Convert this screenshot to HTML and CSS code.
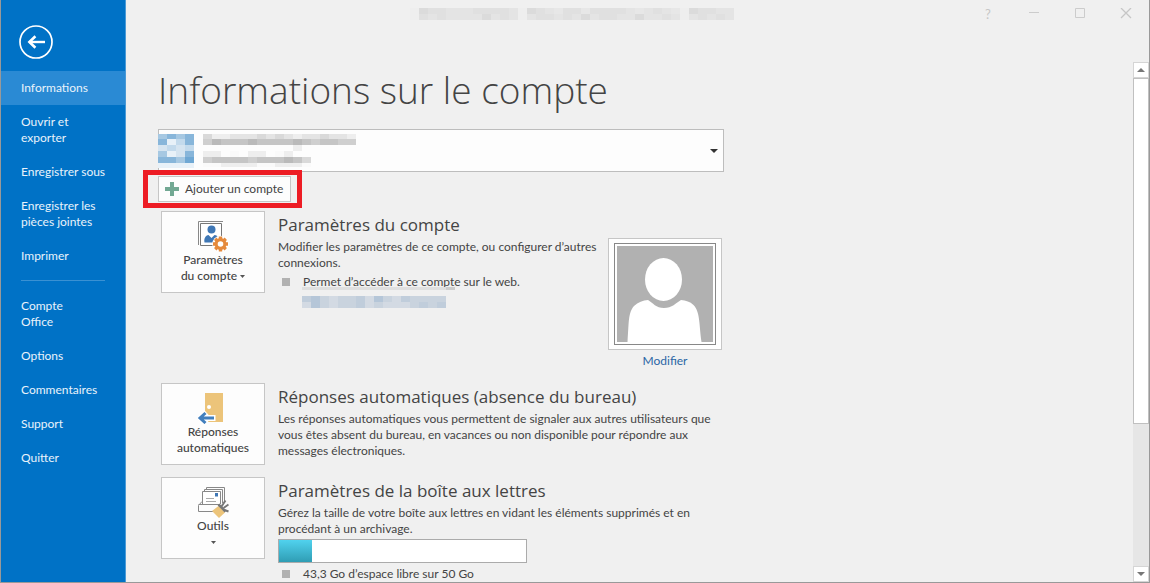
FILE: index.html
```html
<!DOCTYPE html>
<html lang="fr">
<head>
<meta charset="utf-8">
<title>Informations sur le compte</title>
<link rel="stylesheet" href="styles.css">
</head>
<body>
<div class="window">
  <nav class="sidebar" aria-label="Fichier">
    <button class="back" type="button" aria-label="Retour">
      <svg viewBox="0 0 34 34" width="34" height="34" fill="none" stroke="#fff"><circle cx="17" cy="17" r="16" stroke-width="1.7"/><path d="M10.5 17H26" stroke-width="2.4"/><path d="M16.4 11.2 10.4 17l6 5.8" stroke-width="2.6"/></svg>
    </button>
    <ul class="menu">
      <li><a class="menu-item current" href="#info" aria-current="page">Informations</a></li>
      <li><a class="menu-item" href="#open">Ouvrir et<br>exporter</a></li>
      <li><a class="menu-item" href="#save">Enregistrer sous</a></li>
      <li><a class="menu-item" href="#attachments">Enregistrer les<br>pièces jointes</a></li>
      <li><a class="menu-item" href="#print">Imprimer</a></li>
    </ul>
    <hr class="menu-rule">
    <ul class="menu">
      <li><a class="menu-item" href="#account">Compte<br>Office</a></li>
      <li><a class="menu-item" href="#options">Options</a></li>
      <li><a class="menu-item" href="#feedback">Commentaires</a></li>
      <li><a class="menu-item" href="#support">Support</a></li>
      <li><a class="menu-item" href="#quit">Quitter</a></li>
    </ul>
  </nav>

  <div class="stage">
    <header class="titlebar">
      <svg class="mosaic" data-kind="title" width="324" height="18"></svg>
      <div class="controls">
        <button type="button" aria-label="Aide">?</button>
        <button type="button" aria-label="Réduire"><svg width="12" height="12" viewBox="0 0 12 12"><path d="M1 4.5h10" stroke="#ccc"/></svg></button>
        <button type="button" aria-label="Agrandir"><svg width="12" height="12" viewBox="0 0 12 12"><path d="M1.5 .5h9v9h-9z" fill="none" stroke="#ccc"/></svg></button>
        <button type="button" aria-label="Fermer"><svg width="12" height="12" viewBox="0 0 12 12"><path d="m1 0 10 10M11 0 1 10" stroke="#c6c6c6" stroke-width="1.3"/></svg></button>
      </div>
    </header>

    <div class="view">
      <main class="content">
        <h1>Informations sur le compte</h1>

        <div class="account">
          <select class="account-select" aria-label="Compte"><option></option></select>
          <div class="account-face">
            <svg class="mosaic" data-kind="avatar" width="36" height="34"></svg>
            <svg class="mosaic" data-kind="name" width="153" height="34"></svg>
            <svg class="caret" width="8" height="4" viewBox="0 0 8 4"><path d="M0 0h8L4 4z" fill="#333"/></svg>
          </div>
        </div>

        <div class="add-row">
          <button class="add" type="button">
            <svg width="14" height="14" viewBox="0 0 14 14"><path d="M5 0h4v5h5v4H9v5H5V9H0V5h5z" fill="#72a893"/></svg>
            <span>Ajouter un compte</span>
          </button>
          <div class="highlight"></div>
        </div>

        <section class="row row-account">
          <button class="tile" type="button">
            <svg width="32" height="31" viewBox="0 0 32 31">
              <path d="M1.5 24V.5H26" fill="none" stroke="#888"/>
              <path d="M3.5 2.500H24.500V24.500H3.500z" fill="#fff" stroke="#777"/>
              <circle cx="14.500" cy="8.500" r="4" fill="#3f77b5"/>
              <path d="M7.500 21.500c-.8-4 1-7 4-7.500l3 3 3-3c2 .2 3 1 3.800 2.200L16 21.500z" fill="#3f77b5"/>
              <circle cx="23.500" cy="23" r="8.300" fill="#fff"/>
              <circle cx="23.500" cy="23" r="4.400" fill="none" stroke="#e58a3c" stroke-width="3.200"/>
              <path d="M23.500 15.500v3M23.500 27.500v3M16 23h3M28 23h3M18.200 17.700l2.200 2.200M26.600 26.100l2.200 2.200M18.200 28.300l2.200-2.200M26.600 19.900l2.200-2.200" stroke="#e58a3c" stroke-width="3.400"/>
            </svg>
            <span>Paramètres<br>du compte <svg width="5" height="3" viewBox="0 0 5 3" class="mini"><path d="M0 0h5L2.500 3z" fill="#555"/></svg></span>
          </button>
          <div class="body">
            <h2>Paramètres du compte</h2>
            <p>Modifier les paramètres de ce compte, ou configurer d’autres connexions.</p>
            <ul class="facts">
              <li>Permet d’accéder à ce compte sur le web.
                <svg class="mosaic" data-kind="link" width="153" height="21"></svg>
              </li>
            </ul>
          </div>
          <figure class="photo">
            <div class="frame">
              <svg viewBox="0 0 96 96" width="96" height="96"><path fill="#b1b1b1" d="M0 0h96v96H0z"/><ellipse cx="46.500" cy="33.500" rx="18.500" ry="21.500" fill="#fff"/><path d="M10.500 96C12 76 11 67 17 60c4-4 9-5.500 14-6 5 3 8 8 16 8s12-5 17-8c5 .5 9 1.500 12.500 5C83 66 82 76 84.500 96z" fill="#fff"/></svg>
            </div>
            <figcaption><a href="#photo">Modifier</a></figcaption>
          </figure>
        </section>

        <section class="row row-replies">
          <button class="tile" type="button">
            <svg width="32" height="31" viewBox="0 0 32 31">
              <path d="M8 0h18v29H8z" fill="#ecc47a"/>
              <circle cx="12" cy="14" r="2" fill="#fff"/>
              <path d="M18.500 25H3M9.500 19.500 3.500 25l6 5.500" fill="none" stroke="#fff" stroke-width="6"/>
              <path d="M17 25H3M8.500 20 3 25l5.500 5" fill="none" stroke="#427fbd" stroke-width="3"/>
            </svg>
            <span>Réponses<br>automatiques</span>
          </button>
          <div class="body">
            <h2>Réponses automatiques (absence du bureau)</h2>
            <p>Les réponses automatiques vous permettent de signaler aux autres utilisateurs que vous êtes absent du bureau, en vacances ou non disponible pour répondre aux messages électroniques.</p>
          </div>
        </section>

        <section class="row row-mailbox">
          <button class="tile" type="button">
            <svg width="32" height="31" viewBox="0 0 32 31">
              <path d="M9.500 3V.5H27.500V14M7.500 5V2.500H25.500V16" fill="none" stroke="#888"/>
              <path d="M5.500 17V4.500H23.500V17" fill="#fff" stroke="#888"/>
              <path d="M18 6h3v3.500h-3z" fill="#3f77b5"/>
              <path d="M9 11.500h8M9 14.500h10" stroke="#aaa"/>
              <path d="M5 14.500 1.500 18.500V24.500H18M1.500 17.500H22" fill="none" stroke="#888"/>
              <path d="m15 24 6.500-5 6.500 6.500-6 5.500z" fill="#ecc47a"/>
              <path d="m21.500 17.500 7 7" stroke="#777" stroke-width="2.500"/>
              <path d="m24.500 19.500 4-6M26.500 21l5-3.500M27.500 23l4 1.500" stroke="#777" stroke-width="2"/>
            </svg>
            <span>Outils</span>
            <svg width="5" height="3" viewBox="0 0 5 3" class="below"><path d="M0 0h5L2.500 3z" fill="#555"/></svg>
          </button>
          <div class="body">
            <h2>Paramètres de la boîte aux lettres</h2>
            <p>Gérez la taille de votre boîte aux lettres en vidant les éléments supprimés et en procédant à un archivage.</p>
            <div class="quota" role="img" aria-label="Espace utilisé"><div class="quota-used" style="width:13.2%"></div></div>
            <ul class="facts"><li>43,3 Go d’espace libre sur 50 Go</li></ul>
          </div>
        </section>
      </main>

      <div class="scrollbar">
        <button type="button" aria-label="Défiler vers le haut"><svg width="8" height="4" viewBox="0 0 8 4"><path d="M0 4h8L4 0z" fill="#777"/></svg></button>
        <div class="track"><div class="thumb"></div></div>
        <button type="button" aria-label="Défiler vers le bas"><svg width="8" height="4" viewBox="0 0 8 4"><path d="M0 0h8L4 4z" fill="#777"/></svg></button>
      </div>
    </div>
  </div>
</div>
<script src="mosaic.js"></script>
</body>
</html>
```
FILE: mosaic.js
```js
// Masks private text with 9px-wide blocks. Each character picks a shade; a dot leaves a gap.
// A row is [top, height, cells].
const grey = {
  a: '#fafafa', b: '#eeeeee', c: '#e4e4e4', d: '#d9d9d9', e: '#cfcfcf', f: '#c5c5c5', g: '#bababa',
  0: '#eeeeee', 1: '#ececec', 2: '#e7e7e7', 3: '#e4e4e4', 4: '#e0e0e0', 5: '#dbdbdb'
};
const blue = {
  a: '#e8f1f8', b: '#d5e4f0', c: '#c3daec', d: '#a6c8e2', e: '#88b6da', f: '#6fa8d4',
  g: '#d3dae3', h: '#c9d3de', i: '#c0cddb', j: '#b5c6d8', k: '#dfdfdf', l: '#cccccc'
};
const mosaics = {
  title: { shades: grey, rows: [
    [0, 6, '0' + '54433344443' + '0' + '54324424444323432' + '0' + '54433'],
    [6, 6, '0' + '43433335343' + '0' + '34434353443353343' + '0' + '34343']
  ] },
  avatar: { shades: blue, rows: [
    [0, 5, 'dede'], [5, 6, 'eace'], [11, 6, 'bcbc'], [17, 6, 'dabe'], [23, 6, 'eedf'], [29, 5, 'aaaa']
  ] },
  name: { shades: grey, rows: [
    [0, 5, 'dbbcccdcdcbccdccb'], [5, 6, 'egfffgffffgfeffee'], [11, 6, '..........b......'],
    [17, 6, 'bb.a.bb.ab.......'], [23, 6, 'effffefffgfd.....'], [29, 4, 'aabbbbaabbba.....']
  ] },
  link: { shades: blue, rows: [
    [0, 3, 'kkkkkkkkkkkkkkkkl'], [9, 6, 'ijhghhigjhgihhhh'], [15, 6, 'gjhghhighggghihi']
  ] }
};
for (const svg of document.querySelectorAll('.mosaic')) {
  const { shades, rows } = mosaics[svg.dataset.kind];
  for (const [y, height, cells] of rows) {
    [...cells].forEach((cell, i) => {
      if (!shades[cell]) return;
      const rect = document.createElementNS('http://www.w3.org/2000/svg', 'rect');
      for (const [key, value] of Object.entries({ x: i * 9, y, width: 9, height, fill: shades[cell] })) rect.setAttribute(key, value);
      svg.append(rect);
    });
  }
}
```
FILE: styles.css
```css
* { box-sizing: border-box; }
body { margin: 0; font: 12px/16px Lato, "Open Sans", sans-serif; color: #444; background: #f0f0f0; }
button, select { font: inherit; color: inherit; }
ul { list-style: none; margin: 0; padding: 0; }
svg { display: block; flex: none; }
.window { display: flex; height: 100vh; overflow: hidden; border: solid #999; border-width: 0 1px 1px; }

.sidebar { flex: none; width: 125px; background: #0072c6; color: #fff; border-right: 1px solid #4a9ad6; }
.back { display: block; margin: 25px 0 12px 18px; padding: 0; border: 0; background: none; }
.menu-item { display: block; padding: 9px 8px 9px 20px; color: #e9f3fb; text-decoration: none; }
.menu-item.current { background: #2a8ad4; }
.menu-rule { margin: 7px 20px 8px; border: 0; border-top: 1px solid #3a91d3; }

.stage { flex: 1; min-width: 0; display: flex; flex-direction: column; }
.titlebar { flex: none; display: flex; height: 62px; padding: 8px 17px 0 284px; justify-content: space-between; align-items: flex-start; }
.controls { display: flex; gap: 34px; }
.controls button { display: grid; place-items: center; width: 12px; height: 12px; padding: 0; border: 0; background: none; color: #c6c6c6; font-size: 13px; line-height: 12px; }

.view { flex: 1; min-height: 0; display: flex; justify-content: space-between; }
.content { width: 598px; padding-left: 32px; }
h1, h2 { font-family: "Open Sans", "Noto Sans", sans-serif; white-space: nowrap; }
h1 { margin: 4px 0 15px; font-size: 37px; line-height: 48px; font-weight: 300; }
h2 { margin: 0 0 2px; font-size: 17px; line-height: 24px; font-weight: 400; }
p { margin: 0; }

.account { display: grid; height: 43px; }
.account > * { grid-area: 1 / 1; }
.account-select { appearance: none; border: 1px solid #bdbdbd; border-radius: 0; background: #fdfdfd; }
.account-face { display: flex; align-items: center; gap: 9px; padding: 0 6px 0 0; pointer-events: none; }
.caret { margin-left: auto; }

.add-row { position: relative; padding-top: 4px; }
.add { display: flex; align-items: center; gap: 6px; height: 26px; padding: 0 7px 0 6px; border: 1px solid #c6c6c6; background: #fdfdfd; white-space: nowrap; }
.highlight { position: absolute; inset: -2px auto -6px -15px; width: 159px; border: 5px solid #ed1c24; pointer-events: none; }

.row { display: flex; align-items: flex-start; padding-left: 3px; }
.row-account { margin-top: 9px; min-height: 172px; }
.row-replies { min-height: 94px; }
.tile { flex: none; display: flex; flex-direction: column; align-items: center; width: 104px; height: 82px; margin-right: 13px; padding: 9px 0 0; border: 1px solid #c6c6c6; background: #fdfdfd; font-weight: 500; }
.tile span { white-space: nowrap; }
.mini { display: inline-block; vertical-align: middle; }
.below { margin-top: 7px; }
.body { flex: 1; min-width: 0; padding-top: 2px; }
.facts { padding-left: 25px; margin-top: 3px; }
.facts li { position: relative; white-space: nowrap; }
.facts li::before { content: ""; position: absolute; left: -21px; top: 4px; width: 8px; height: 8px; background: #b1b1b1; }
.facts .mosaic { margin: -3px 0 0 -1px; }
.photo { flex: none; width: 114px; margin: 27px 2px 0 0; text-align: center; }
.frame { padding: 4px 5px; border: 1px solid #c6c6c6; background: #fff; }
.frame svg { width: 100%; height: auto; padding: 2px; border: 1px solid #888; }
.photo figcaption { margin-top: 3px; }
.photo a { color: #2a66a5; text-decoration: none; }
.quota { width: 249px; height: 24px; margin-top: 2px; border: 1px solid #ababab; background: #fff; }
.quota-used { height: 100%; background: linear-gradient(#50d2ee, #2f9db4); }

.scrollbar { display: flex; flex-direction: column; width: 16px; background: #e6e6e6; }
.scrollbar button { flex: none; display: grid; place-items: center; width: 16px; height: 16px; padding: 0; border: 1px solid #d5d5d5; background: #fff; }
.track { flex: 1; }
.thumb { height: 71%; border: 1px solid #c0c0c0; background: #fff; }
```
